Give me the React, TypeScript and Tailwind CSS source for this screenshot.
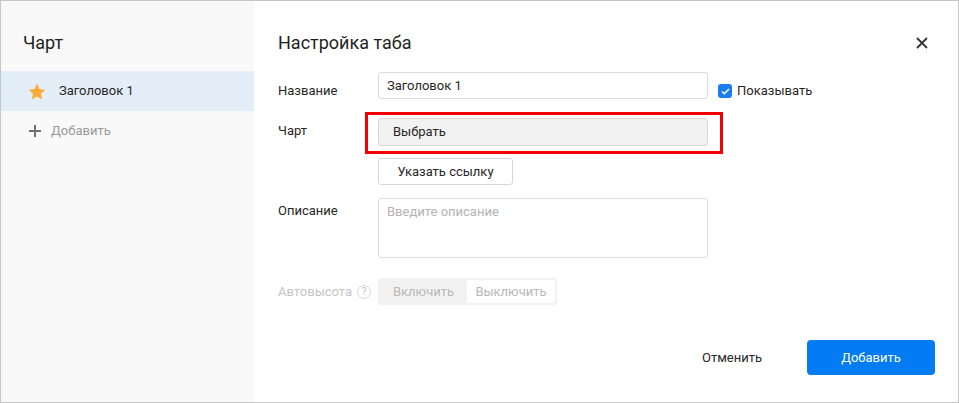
import React from 'react'

const font = { fontFamily: 'Roboto, "Liberation Sans", sans-serif' }

function StarIcon() {
  return (
    <svg width="18" height="17" viewBox="0 0 24 23" className="shrink-0">
      <path d="M12 0.8l3.4 7.2 7.8 1-5.7 5.4 1.5 7.8L12 18.4l-7 3.8 1.5-7.8L0.8 9l7.8-1z" fill="#ffab37" />
    </svg>
  )
}

function PlusIcon() {
  return (
    <svg width="12" height="12" viewBox="0 0 12 12" className="shrink-0">
      <path d="M6 0v12M0 6h12" stroke="#707070" strokeWidth="2" />
    </svg>
  )
}

function CloseIcon() {
  return (
    <svg width="12" height="12" viewBox="0 0 12 12">
      <path d="M1 1l10 10M11 1L1 11" stroke="#333" strokeWidth="1.8" />
    </svg>
  )
}

export default function App() {
  return (
    <div
      className="w-[959px] h-[403px] border border-[#c6c6c6] flex text-[13px] text-[#262626] bg-white"
      style={font}
    >
      {/* Sidebar */}
      <div className="w-[253px] bg-[#f9f9f9] flex flex-col">
        <div className="h-[70px] pt-[30px] pl-[22px] text-[18px] leading-[24px] text-[#1f1f1f]">Чарт</div>
        <div className="h-[40px] bg-[#e4eef8] flex items-center pl-[27px]">
          <StarIcon />
          <span className="ml-[13px] leading-[18px]">Заголовок 1</span>
        </div>
        <div className="h-[40px] flex items-center pl-[28px]">
          <PlusIcon />
          <span className="ml-[10px] leading-[18px] text-[#999]">Добавить</span>
        </div>
      </div>

      {/* Main */}
      <div className="flex-1 flex flex-col pl-[24px] pt-[30px]">
        <div className="h-[24px] flex items-center justify-between pr-[30px]">
          <h1 className="text-[18px] leading-[24px] text-[#1f1f1f]">Настройка таба</h1>
          <button className="w-[12px] h-[12px] flex items-center justify-center">
            <CloseIcon />
          </button>
        </div>

        <div className="mt-[17px] flex flex-col">
          {/* Название */}
          <div className="flex h-[27px] items-start">
            <div className="w-[100px] pt-[10px] leading-[18px]">Название</div>
            <input
              readOnly
              value="Заголовок 1"
              className="w-[330px] h-[27px] border border-[#dcdcdc] rounded-[3px] px-[8px] outline-none text-[13px] text-[#262626] bg-white"
            />
            <label className="ml-[10px] pt-[10px] flex items-center">
              <span className="w-[14px] h-[14px] rounded-[3px] bg-[#1a7ef2] flex items-center justify-center">
                <svg width="9" height="7" viewBox="0 0 9 7">
                  <path d="M1 3.5l2.3 2.2L8 1" stroke="#fff" strokeWidth="1.6" fill="none" />
                </svg>
              </span>
              <span className="ml-[5px] leading-[18px]">Показывать</span>
            </label>
          </div>

          {/* Чарт */}
          <div className="flex h-[28px] mt-[19px] items-start">
            <div className="w-[100px] pt-[4px] leading-[18px]">Чарт</div>
            <div className="relative">
              <button className="w-[330px] h-[28px] border border-[#d6d6d6] rounded-[3px] bg-[#f2f2f2] text-left px-[14px] text-[13px] text-[#262626]">
                Выбрать
              </button>
              <div className="absolute -left-[13px] -top-[6px] -right-[15px] -bottom-[8px] border-[3px] border-[#f00000]" />
            </div>
          </div>

          {/* Указать ссылку */}
          <div className="flex h-[27px] mt-[12px]">
            <div className="w-[100px]" />
            <button className="w-[135px] h-[27px] border border-[#d6d6d6] rounded-[3px] bg-white text-[13px] text-[#262626]">
              Указать ссылку
            </button>
          </div>

          {/* Описание */}
          <div className="flex h-[60px] mt-[13px] items-start">
            <div className="w-[100px] pt-[4px] leading-[18px]">Описание</div>
            <textarea
              readOnly
              placeholder="Введите описание"
              className="w-[330px] h-[60px] border border-[#dcdcdc] rounded-[3px] px-[8px] py-[4px] leading-[18px] outline-none resize-none text-[13px] placeholder:text-[#b3b3b3]"
            />
          </div>

          {/* Автовысота */}
          <div className="flex h-[27px] mt-[20px] items-center">
            <div className="w-[100px] flex items-center text-[#c4c4c4] leading-[18px]">
              Автовысота
              <span className="ml-[5px] w-[14px] h-[14px] rounded-full border border-[#d9d9d9] flex items-center justify-center text-[10px] leading-none text-[#c4c4c4]">
                ?
              </span>
            </div>
            <div className="h-[27px] w-[179px] bg-[#f2f2f2] rounded-[3px] p-[2px] flex text-[#b8b8b8]">
              <div className="w-[87px] flex items-center justify-center">Включить</div>
              <div className="w-[88px] bg-white rounded-[2px] flex items-center justify-center">Выключить</div>
            </div>
          </div>
        </div>

        {/* Footer */}
        <div className="mt-[35px] flex justify-end items-center pr-[23px]">
          <button className="h-[35px] px-[22px] text-[13px] text-[#262626]">Отменить</button>
          <button className="ml-[23px] h-[35px] w-[128px] rounded-[4px] bg-[#027bf3] text-white text-[13px]">
            Добавить
          </button>
        </div>
      </div>
    </div>
  )
}
